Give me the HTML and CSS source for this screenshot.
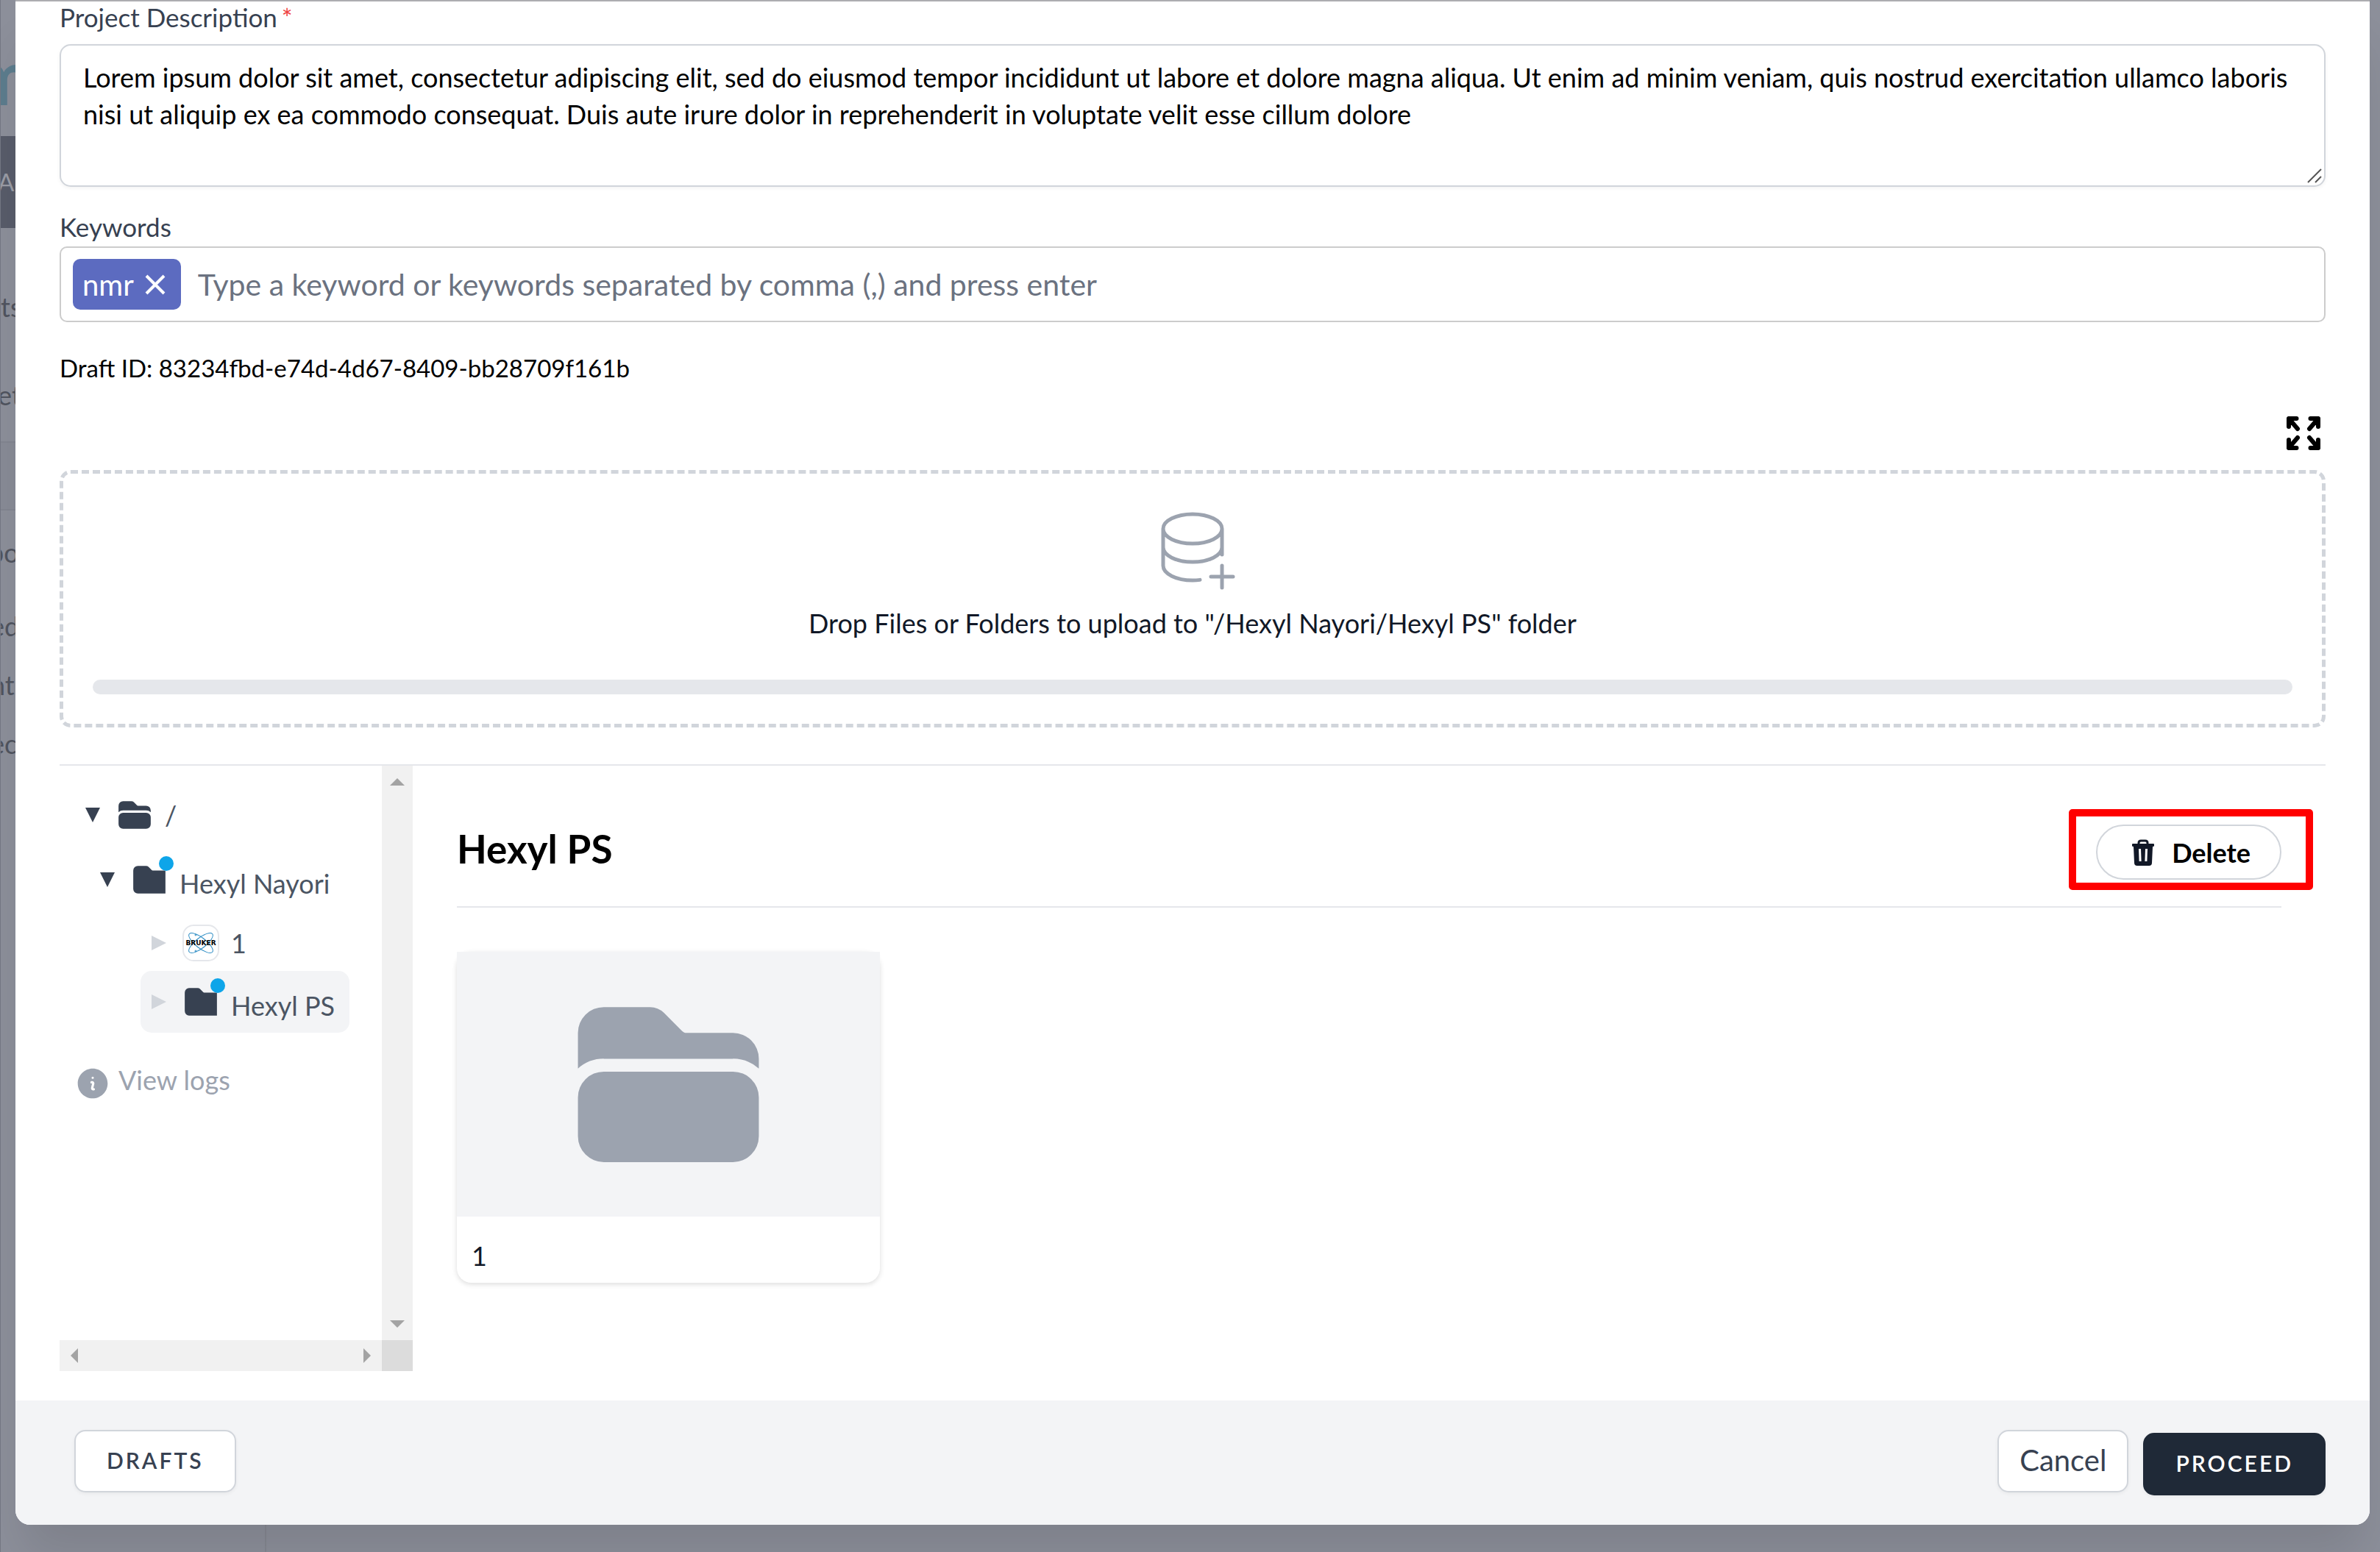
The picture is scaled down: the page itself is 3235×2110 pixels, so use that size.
FILE: index.html
```html
<!DOCTYPE html>
<html lang="en">
<head>
<meta charset="utf-8">
<title>Upload project</title>
<link rel="stylesheet" href="styles.css">
</head>
<body>
<svg class="sprite" aria-hidden="true">
  <symbol id="folder-open" viewBox="0 0 24 24">
    <path d="M19.5 21a3 3 0 0 0 3-3v-4.5a3 3 0 0 0-3-3h-15a3 3 0 0 0-3 3V18a3 3 0 0 0 3 3h15ZM1.5 10.146V6a3 3 0 0 1 3-3h5.379a2.25 2.25 0 0 1 1.59.659l2.122 2.121c.14.141.331.22.53.22H19.5a3 3 0 0 1 3 3v1.146A4.483 4.483 0 0 0 19.5 9h-15a4.483 4.483 0 0 0-3 1.146Z"/>
  </symbol>
  <symbol id="folder-closed" viewBox="0 0 24 24">
    <path d="M4.5 3h5.379a2.25 2.25 0 0 1 1.59.659l2.122 2.121c.14.141.331.22.53.22H22.5v15h-18a3 3 0 0 1-3-3V6a3 3 0 0 1 3-3Z"/>
  </symbol>
  <symbol id="caret-down" viewBox="0 0 20 20"><path d="M0 0h20L10 20Z"/></symbol>
  <symbol id="caret-right" viewBox="0 0 20 20"><path d="M0 0v20l20-10Z"/></symbol>
</svg>

<aside class="sidebar" aria-hidden="true">
  <div class="sidebar-logo">m</div>
  <div class="sidebar-action">A</div>
  <div class="sidebar-item first">ts</div>
  <div class="sidebar-item second">et</div>
  <div class="sidebar-divider"></div>
  <div class="sidebar-item third">po</div>
  <div class="sidebar-item fourth">ed</div>
  <div class="sidebar-item">nt</div>
  <div class="sidebar-item">ec</div>
</aside>

<div class="modal" role="dialog" aria-label="Upload project">
  <div class="modal-body">
    <label class="label" for="description">Project Description<span class="required">*</span></label>
    <div class="textarea-wrap">
      <textarea class="textarea" id="description">Lorem ipsum dolor sit amet, consectetur adipiscing elit, sed do eiusmod tempor incididunt ut labore et dolore magna aliqua. Ut enim ad minim veniam, quis nostrud exercitation ullamco laboris nisi ut aliquip ex ea commodo consequat. Duis aute irure dolor in reprehenderit in voluptate velit esse cillum dolore</textarea>
      <svg class="resize-grip" viewBox="0 0 22 22" aria-hidden="true"><path d="M2 20 20 2M12 20l8-8"/></svg>
    </div>

    <label class="label keywords-label" for="keywords">Keywords</label>
    <div class="keywords">
      <span class="chip">nmr
        <button class="chip-remove" type="button" aria-label="Remove nmr"><svg viewBox="0 0 28 28"><path d="m2 2 24 24M26 2 2 26"/></svg></button>
      </span>
      <input class="keywords-input" id="keywords" type="text" placeholder="Type a keyword or keywords separated by comma (,) and press enter">
    </div>

    <p class="draft-id">Draft ID: 83234fbd-e74d-4d67-8409-bb28709f161b</p>

    <div class="toolbar">
      <button class="expand" type="button" aria-label="Full screen">
        <svg viewBox="0 0 46 46"><path d="M3 14V3h10.500M3 3l12 14M32.500 3H43v11M43 3 31 17M3 32v11h10.500M3 43l12-14M32.500 43H43V32M43 43 31 29"/></svg>
      </button>
    </div>

    <div class="dropzone">
      <svg class="dropzone-icon" viewBox="0 0 48 48" aria-hidden="true"><path d="M8 14v20c0 4.418 7.163 8 16 8 1.381 0 2.721-.087 4-.252M8 14c0 4.418 7.163 8 16 8s16-3.582 16-8M8 14c0-4.418 7.163-8 16-8s16 3.582 16 8m0 0v14m0-4c0 4.418-7.163 8-16 8S8 28.418 8 24m32 10v6m0 0v6m0-6h6m-6 0h-6"/></svg>
      <p class="dropzone-text">Drop Files or Folders to upload to "/Hexyl Nayori/Hexyl PS" folder</p>
      <div class="progress" role="progressbar" aria-label="Upload progress" aria-valuenow="0"></div>
    </div>

    <div class="browser">
      <div class="tree-panel">
        <div class="tree">
          <ul class="tree-list">
            <li class="node root">
              <svg class="caret open"><use href="#caret-down"/></svg>
              <span class="node-icon"><svg><use href="#folder-open"/></svg></span>
              <span>/</span>
            </li>
            <li class="node level-1">
              <svg class="caret open"><use href="#caret-down"/></svg>
              <span class="node-icon"><svg><use href="#folder-closed"/></svg><i class="dot"></i></span>
              <span class="node-name">Hexyl Nayori</span>
            </li>
            <li class="node level-2">
              <svg class="caret"><use href="#caret-right"/></svg>
              <span class="node-icon brand">
                <svg viewBox="0 0 46 46">
                  <g class="orbit">
                    <ellipse cx="23" cy="23" rx="20" ry="7" transform="rotate(38 23 23)"/>
                    <ellipse cx="23" cy="23" rx="20" ry="7" transform="rotate(-38 23 23)"/>
                    <circle cx="16" cy="12" r="1"/><circle cx="16" cy="34" r="1"/>
                  </g>
                  <text class="brand-name" x="23" y="26" text-anchor="middle">BRUKER</text>
                </svg>
              </span>
              <span>1</span>
            </li>
            <li class="node level-2 selected">
              <svg class="caret"><use href="#caret-right"/></svg>
              <span class="node-icon"><svg><use href="#folder-closed"/></svg><i class="dot"></i></span>
              <span class="node-name">Hexyl PS</span>
            </li>
          </ul>
          <button class="logs" type="button">
            <svg viewBox="0 0 24 24" aria-hidden="true"><path fill-rule="evenodd" clip-rule="evenodd" d="M2.250 12c0-5.385 4.365-9.750 9.750-9.750s9.750 4.365 9.750 9.750-4.365 9.750-9.750 9.750S2.250 17.385 2.250 12zm8.706-1.442c1.146-.573 2.437.463 2.126 1.706l-.709 2.836.042-.02a.75.75 0 01.67 1.340l-.04.022c-1.147.573-2.438-.463-2.127-1.706l.71-2.836-.042.02a.75.75 0 11-.671-1.340l.041-.022zM12 9a.75.75 0 100-1.500.75.75 0 000 1.500z"/></svg>
            <span>View logs</span>
          </button>
        </div>
        <div class="scrollbar vertical" aria-hidden="true">
          <svg viewBox="0 0 20 10"><path d="M0 10h20L10 0Z"/></svg>
          <svg viewBox="0 0 20 10"><path d="M0 0h20L10 10Z"/></svg>
        </div>
        <div class="scrollbar horizontal" aria-hidden="true">
          <svg viewBox="0 0 10 20"><path d="M10 0v20L0 10Z"/></svg>
          <svg viewBox="0 0 10 20"><path d="M0 0v20l10-10Z"/></svg>
        </div>
        <div class="scroll-corner"></div>
      </div>

      <section class="files">
        <header class="files-header">
          <h2 class="files-title">Hexyl PS</h2>
          <div class="highlighted">
            <button class="delete" type="button">
              <svg viewBox="0 0 30 36" aria-hidden="true">
                <path class="trash-handle" d="M9 7V5q0-3 3-3h6q3 0 3 3v2"/>
                <path fill-rule="evenodd" d="M1 6h28q1 0 1 1v2q0 1-2 1l-1 22q0 4-4 4H7q-4 0-4-4L2 10Q0 10 0 9V7q0-1 1-1Zm8 7 .6 17h3L12 13Zm9 0-.6 17h3L21 13Z"/>
              </svg>
              <span>Delete</span>
            </button>
          </div>
        </header>
        <div class="card">
          <div class="card-thumb"><svg><use href="#folder-open"/></svg></div>
          <p class="card-name">1</p>
        </div>
      </section>
    </div>
  </div>

  <footer class="modal-footer">
    <button class="btn btn-caps" type="button">DRAFTS</button>
    <div class="footer-actions">
      <button class="btn btn-cancel" type="button">Cancel</button>
      <button class="btn btn-caps btn-primary" type="button">PROCEED</button>
    </div>
  </footer>
</div>
</body>
</html>
```
FILE: styles.css
```css
* { box-sizing: border-box; }

body {
  margin: 0;
  position: relative;
  min-height: 100vh;
  overflow-x: hidden;
  background: #8c8f9a;
  color: #000;
  font-family: Lato, "Open Sans", sans-serif;
  font-size: 36px;
  line-height: 50px;
}

p, h2, ul { margin: 0; padding: 0; }
button { margin: 0; padding: 0; border: 0; background: none; font: inherit; color: inherit; cursor: pointer; }
svg { display: block; flex: none; }
.sprite { position: absolute; width: 0; height: 0; }

/* Page behind the dialog */
.sidebar {
  position: absolute;
  inset: 0 auto 0 0;
  width: 362px;
  overflow: hidden;
  border-left: 1px solid #757884;
  border-right: 2px solid #848791;
  color: #50545f;
}
.sidebar-logo { height: 185px; padding-top: 60px; font-size: 105px; line-height: 84px; font-weight: 700; text-indent: -42px; color: #5c7c8d; }
.sidebar-action { height: 125px; line-height: 125px; font-size: 33px; background: #585c6a; color: #9a9ca5; text-indent: -4px; }
.sidebar-item { line-height: 80px; }
.sidebar-item.first { margin-top: 67px; }
.sidebar-item.second { margin-top: 40px; text-indent: -4px; }
.sidebar-divider { height: 94px; margin-top: 23px; border: solid #828590; border-width: 2px 0; background: #888b96; }
.sidebar-item.third { margin-top: 17px; text-indent: -16px; }
.sidebar-item.fourth { margin-top: 20px; }
.sidebar-item.fourth, .sidebar-item.fourth ~ .sidebar-item { text-indent: -14px; }

/* Dialog */
.modal {
  position: relative;
  margin: 0 14px 37px 21px;
  overflow: hidden;
  border-top: 2px solid #adadb0;
  border-radius: 0 0 20px 20px;
  background: #fff;
  box-shadow: 0 50px 62px -12px rgba(0, 0, 0, .1);
}
.modal-body { padding: 0 60px 40px; }

.label { display: block; font-size: 35px; line-height: 42px; color: #374151; }
.required { margin-left: 6px; color: #ef4444; }
.textarea-wrap { position: relative; margin-top: 16px; }
.textarea {
  display: block;
  width: 100%;
  height: 194px;
  padding: 18px 30px;
  border: 2px solid #d1d5db;
  border-radius: 15px;
  box-shadow: 0 2px 5px rgba(0, 0, 0, .05);
  background: #fff;
  color: #000;
  font: inherit;
  resize: none;
  outline: none;
  overflow: hidden;
}
.resize-grip { position: absolute; right: 4px; bottom: 4px; width: 22px; height: 22px; fill: none; stroke: #555; stroke-width: 2; }

.keywords-label { margin-top: 33px; }
.keywords {
  display: flex;
  align-items: center;
  gap: 23px;
  height: 103px;
  margin-top: 6px;
  padding: 0 16px;
  border: 2px solid #ccc;
  border-radius: 10px;
}
.chip {
  display: flex;
  align-items: center;
  gap: 15px;
  height: 69px;
  padding: 0 21px 0 13px;
  border-radius: 10px;
  background: #5c6bc0;
  color: #fff;
  font-size: 40px;
}
.chip-remove svg { width: 28px; height: 28px; fill: none; stroke: #fff; stroke-width: 4; }
.keywords-input { flex: 1; min-width: 0; padding: 0; border: 0; outline: 0; background: none; font: inherit; font-size: 41px; }
.keywords-input::placeholder { color: #6b7280; opacity: 1; }

.draft-id { margin-top: 37px; font-size: 33px; }

.toolbar { display: flex; justify-content: flex-end; margin-top: 41px; padding-right: 7px; }
.expand svg { width: 46px; height: 46px; fill: none; stroke: #000; stroke-width: 6; stroke-linecap: round; stroke-linejoin: round; }

.dropzone {
  margin-top: 27px;
  padding: 40px;
  border: 5px dashed #d1d5db;
  border-radius: 15px;
  text-align: center;
}
.dropzone-icon { width: 120px; height: 120px; margin: 0 auto; fill: none; stroke: #9ca3af; stroke-width: 2; stroke-linecap: round; stroke-linejoin: round; }
.dropzone-text { margin-top: 18px; color: #111827; }
.progress { height: 20px; margin-top: 52px; border-radius: 10px; background: #e5e7eb; }

/* File browser */
.browser { display: flex; margin-top: 50px; border-top: 2px solid #e5e7eb; }
.tree-panel { display: grid; grid-template: minmax(781px, auto) 42px / 438px 42px; flex: none; }
.tree { padding-top: 23px; color: #4b5563; }
.tree-list { list-style: none; }
.node { display: flex; align-items: center; width: max-content; height: 88px; }
.node.root { padding-left: 35px; }
.node.level-1 { padding-left: 55px; }
.node.level-2 { height: 80px; margin-left: 110px; padding: 4px 20px 0 15px; border-radius: 15px; }
.node.level-2.selected { height: 84px; padding-top: 0; background: #f3f4f6; }
.caret { width: 20px; height: 20px; margin-right: 22px; fill: #d1d5db; }
.caret.open { fill: #374151; }
.node-icon { position: relative; width: 50px; height: 50px; margin-right: 16px; fill: #374151; }
.node-icon svg { width: 100%; height: 100%; }
.node-name { padding-top: 9px; }
.dot { position: absolute; top: -7px; right: -8px; width: 20px; height: 20px; border-radius: 50%; background: #0ea5e9; }
.brand { border: 2px solid #e5e7eb; border-radius: 15px; background: #fff; }
.orbit { fill: none; stroke: #2b8cc4; stroke-width: 1; }
.brand-name { fill: #000; font: 700 9px "DejaVu Sans", sans-serif; }
.logs { display: flex; align-items: center; gap: 10px; margin: 44px 0 0 20px; color: #9ca3af; }
.logs svg { width: 50px; height: 50px; fill: #9ca3af; }
.logs span { padding-bottom: 10px; line-height: 40px; }

.scrollbar { display: flex; align-items: center; justify-content: space-between; background: #f1f1f1; fill: #a3a3a3; }
.scrollbar.vertical { flex-direction: column; padding: 17px 0; }
.scrollbar.vertical svg { width: 20px; height: 10px; }
.scrollbar.horizontal { padding: 0 15px; }
.scrollbar.horizontal svg { width: 10px; height: 20px; }
.scroll-corner { background: #dcdcdc; }

.files { flex: 1; min-width: 0; padding: 80px 60px 0; }
.files-header { display: flex; justify-content: space-between; align-items: flex-start; padding-bottom: 36px; border-bottom: 2px solid #e5e7eb; }
.files-title { font-size: 53px; line-height: 66px; font-weight: 700; }
.highlighted { position: relative; }
.highlighted::after {
  content: "";
  position: absolute;
  inset: -21px -43px -14px -37px;
  border: 10px solid #f00;
  border-radius: 5px;
  pointer-events: none;
}
.delete {
  display: flex;
  align-items: center;
  gap: 24px;
  height: 75px;
  padding: 0 40px 0 47px;
  border: 2px solid #d1d5db;
  border-radius: 38px;
  font-weight: 700;
}
.delete svg { width: 30px; height: 36px; fill: #111827; }
.trash-handle { fill: none; stroke: #111827; stroke-width: 3; }

.card { width: 575px; margin-top: 60px; border-radius: 20px; background: #fff; box-shadow: 0 2px 7px rgba(0, 0, 0, .14); }
.card-thumb { display: flex; align-items: center; justify-content: center; height: 360px; background: #f3f4f6; }
.card-thumb svg { width: 281px; height: 281px; fill: #9ca3af; }
.card-name { padding: 28px 20px 12px; color: #111827; }

/* Footer */
.modal-footer { display: flex; justify-content: space-between; align-items: flex-start; padding: 40px 60px 40px 80px; background: #f3f4f6; }
.footer-actions { display: flex; gap: 20px; }
.btn {
  height: 85px;
  padding: 0 28px 4px;
  border: 2px solid #d1d5db;
  border-radius: 15px;
  background: #fff;
  box-shadow: 0 2px 5px rgba(0, 0, 0, .05);
  color: #374151;
}
.btn-cancel { font-size: 40px; }
.btn-caps { padding: 0 42px 4px; font-size: 30px; font-weight: 600; letter-spacing: 3px; }
.btn-primary { margin-top: 4px; border-color: #1f2937; background: #1f2937; color: #fff; }
```
